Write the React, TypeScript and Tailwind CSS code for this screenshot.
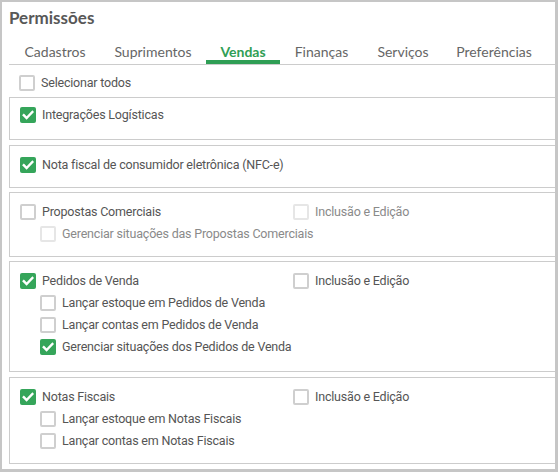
const tabs = [
  { label: "Cadastros", w: "w-[90px]" },
  { label: "Suprimentos", w: "w-[106px]" },
  { label: "Vendas", w: "w-[74px]", active: true },
  { label: "Finanças", w: "w-[83px]" },
  { label: "Serviços", w: "w-[80px]" },
  { label: "Preferências", w: "w-[102px]" },
];

function Box({ checked, disabled }: { checked?: boolean; disabled?: boolean }) {
  if (checked) {
    return (
      <span className="flex h-4 w-4 shrink-0 items-center justify-center rounded-[2px] bg-[#35a55a]">
        <svg width="12" height="12" viewBox="0 0 12 12" fill="none">
          <path d="M1.8 6.2 4.6 9 10.4 3" stroke="white" strokeWidth="2.4" strokeLinecap="square" />
        </svg>
      </span>
    );
  }
  return (
    <span
      className={`h-4 w-4 shrink-0 rounded-[2px] border-2 bg-white ${
        disabled ? "border-[#e6e6e6]" : "border-[#cfcfcf]"
      }`}
    />
  );
}

function Check({
  label,
  checked,
  disabled,
  sub,
  muted,
}: {
  label: string;
  checked?: boolean;
  disabled?: boolean;
  sub?: boolean;
  muted?: boolean;
}) {
  return (
    <div className={`flex h-[22px] items-center gap-[6px] ${sub ? "pl-[20px]" : ""}`}>
      <Box checked={checked} disabled={disabled} />
      <span
        className={`text-[12.5px] tracking-[-0.2px] ${muted ? "text-[#8a8a8a]" : "text-[#555]"}`}
      >
        {label}
      </span>
    </div>
  );
}

function Section({
  className,
  children,
}: {
  className?: string;
  children: React.ReactNode;
}) {
  return (
    <div className={`-mr-[4px] border border-[#cccccc] pl-[10px] ${className ?? ""}`}>{children}</div>
  );
}

export default function App() {
  return (
    <div
      className="h-[472px] w-[558px] overflow-hidden border-b-[3px] border-l-2 border-r-[3px] border-t-2 border-[#c6c6c6] bg-white"
      style={{ fontFamily: "Roboto, 'Liberation Sans', sans-serif" }}
    >
      <div className="pl-[7px]">
        <h1
          className="h-[32px] pt-[6px] text-[17px] font-bold leading-[20px] text-[#585858]"
          style={{ fontFamily: "Lato, 'Noto Sans', sans-serif" }}
        >
          Permissões
        </h1>

        <div className="flex border-b border-[#cccccc]" style={{ fontFamily: "Lato, 'Noto Sans', sans-serif" }}>
          <div className="w-px" />
          {tabs.map((t) => (
            <div
              key={t.label}
              className={`flex h-[30px] items-center justify-center text-[14px] leading-[17px] ${t.w} ${
                t.active
                  ? "border-b-4 border-[#2f9e55] pt-[8px] font-bold text-[#2f9e55]"
                  : "pt-[4px] text-[#666]"
              }`}
            >
              {t.label}
            </div>
          ))}
        </div>

        <div className="pl-[10px] pt-[7px] pb-[3px]">
          <Check label="Selecionar todos" />
        </div>

        <Section className="pt-[6px] pb-[13px]">
          <Check label="Integrações Logísticas" checked />
        </Section>

        <Section className="mt-[5px] pt-[8px] pb-[11px]">
          <Check label="Nota fiscal de consumidor eletrônica (NFC-e)" checked />
        </Section>

        <Section className="mt-[4px] pt-[8px] pb-[11px]">
          <div className="grid grid-cols-[273px_1fr]">
            <Check label="Propostas Comerciais" />
            <Check label="Inclusão e Edição" disabled muted />
          </div>
          <Check label="Gerenciar situações das Propostas Comerciais" sub disabled muted />
        </Section>

        <Section className="mt-[4px] pt-[8px] pb-[13px]">
          <div className="grid grid-cols-[273px_1fr]">
            <Check label="Pedidos de Venda" checked />
            <Check label="Inclusão e Edição" />
          </div>
          <Check label="Lançar estoque em Pedidos de Venda" sub />
          <Check label="Lançar contas em Pedidos de Venda" sub />
          <Check label="Gerenciar situações dos Pedidos de Venda" sub checked />
        </Section>

        <Section className="mt-[5px] pt-[8px] pb-[11px]">
          <div className="grid grid-cols-[273px_1fr]">
            <Check label="Notas Fiscais" checked />
            <Check label="Inclusão e Edição" />
          </div>
          <Check label="Lançar estoque em Notas Fiscais" sub />
          <Check label="Lançar contas em Notas Fiscais" sub />
        </Section>
      </div>
    </div>
  );
}
